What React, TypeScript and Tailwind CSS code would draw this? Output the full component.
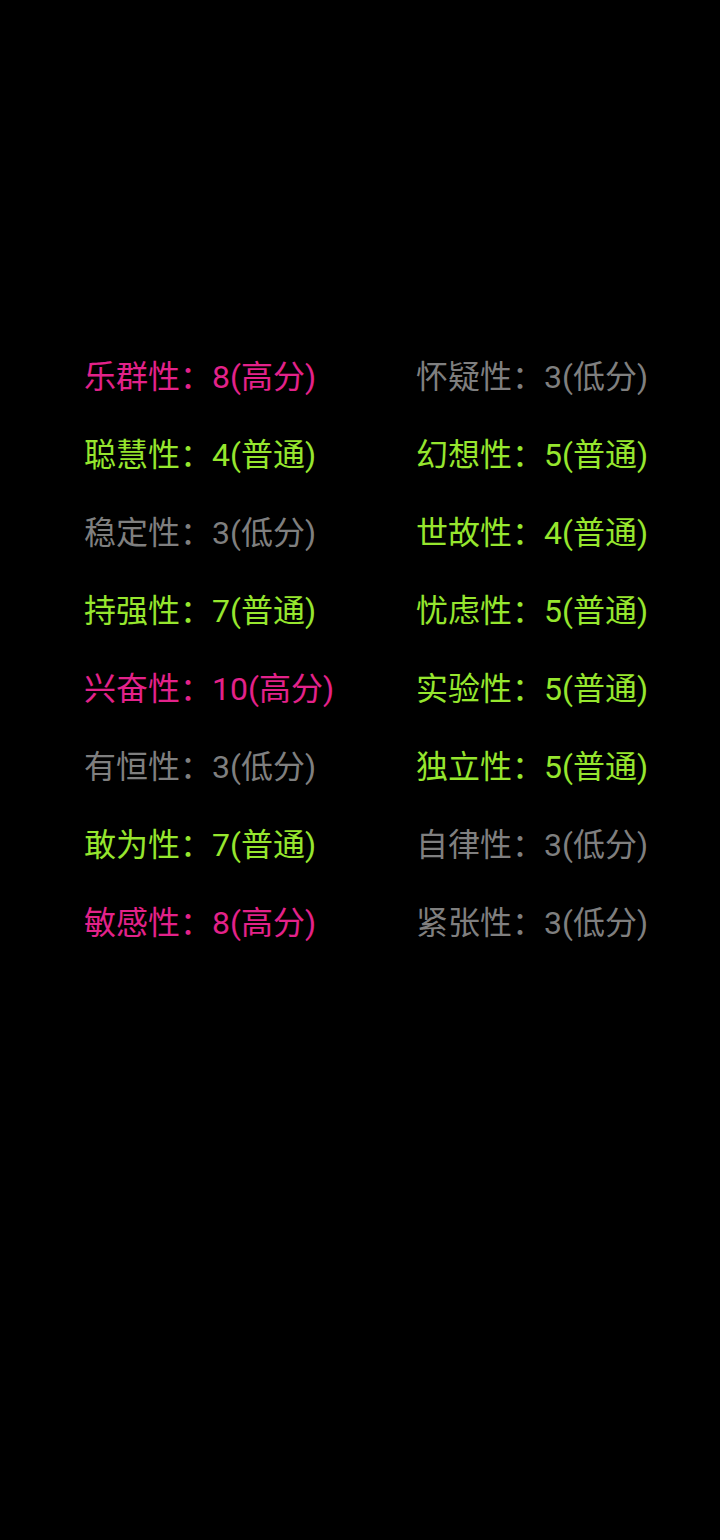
const PINK = "text-[#e3228a]";
const GREEN = "text-[#96e62e]";
const GRAY = "text-[#7f7f7f]";

type Item = { name: string; score: number; level: string };

const left: Item[] = [
  { name: "乐群性", score: 8, level: "高分" },
  { name: "聪慧性", score: 4, level: "普通" },
  { name: "稳定性", score: 3, level: "低分" },
  { name: "持强性", score: 7, level: "普通" },
  { name: "兴奋性", score: 10, level: "高分" },
  { name: "有恒性", score: 3, level: "低分" },
  { name: "敢为性", score: 7, level: "普通" },
  { name: "敏感性", score: 8, level: "高分" },
];

const right: Item[] = [
  { name: "怀疑性", score: 3, level: "低分" },
  { name: "幻想性", score: 5, level: "普通" },
  { name: "世故性", score: 4, level: "普通" },
  { name: "忧虑性", score: 5, level: "普通" },
  { name: "实验性", score: 5, level: "普通" },
  { name: "独立性", score: 5, level: "普通" },
  { name: "自律性", score: 3, level: "低分" },
  { name: "紧张性", score: 3, level: "低分" },
];

function colorFor(level: string) {
  if (level === "高分") return PINK;
  if (level === "低分") return GRAY;
  return GREEN;
}

function Row({ item }: { item: Item }) {
  return (
    <div className={`h-[78px] flex items-center text-[32px] leading-none whitespace-nowrap ${colorFor(item.level)}`}>
      {item.name}：{item.score}({item.level})
    </div>
  );
}

export default function App() {
  return (
    <div
      className="w-[720px] h-[1540px] bg-black pt-[338px]"
      style={{ fontFamily: "Roboto, 'Noto Sans CJK SC', sans-serif" }}
    >
      <div className="flex">
        <div className="w-[416px] pl-[84px]">
          {left.map((it) => (
            <Row key={it.name} item={it} />
          ))}
        </div>
        <div>
          {right.map((it) => (
            <Row key={it.name} item={it} />
          ))}
        </div>
      </div>
    </div>
  );
}
